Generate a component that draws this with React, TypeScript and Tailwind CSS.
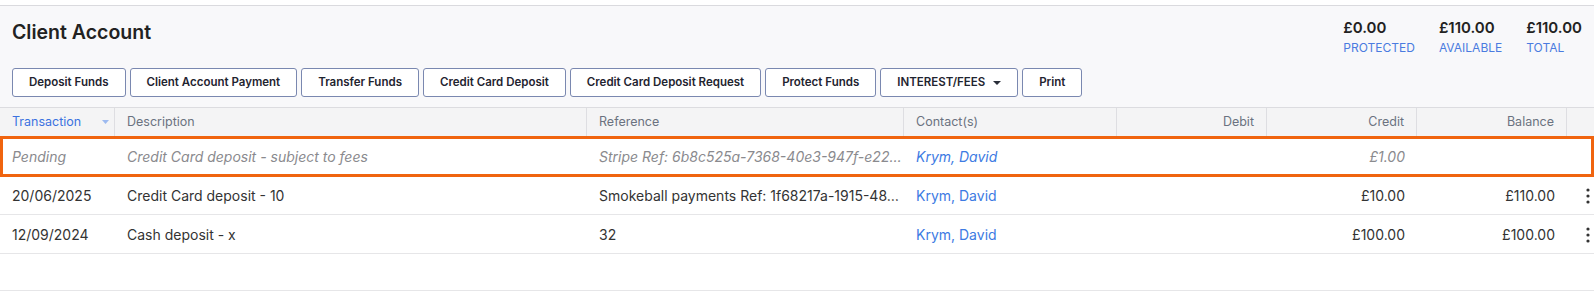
import React from 'react';

const buttons = [
  'Deposit Funds',
  'Client Account Payment',
  'Transfer Funds',
  'Credit Card Deposit',
  'Credit Card Deposit Request',
  'Protect Funds',
];

const totals = [
  { amount: '£0.00', label: 'PROTECTED' },
  { amount: '£110.00', label: 'AVAILABLE' },
  { amount: '£110.00', label: 'TOTAL' },
];

const rows = [
  {
    date: '20/06/2025',
    description: 'Credit Card deposit - 10',
    reference: 'Smokeball payments Ref: 1f68217a-1915-48…',
    contact: 'Krym, David',
    debit: '',
    credit: '£10.00',
    balance: '£110.00',
  },
  {
    date: '12/09/2024',
    description: 'Cash deposit - x',
    reference: '32',
    contact: 'Krym, David',
    debit: '',
    credit: '£100.00',
    balance: '£100.00',
  },
];

const cols = 'grid grid-cols-[115px_472px_317px_213px_150px_150px_150px_1fr]';
const btn =
  'h-[29px] px-4 rounded-[3px] border border-[#7a88b0] bg-white text-[11.5px] font-semibold text-[#1f2430] whitespace-nowrap';

const Dots = () => (
  <svg width="4" height="16" viewBox="0 0 4 16" className="text-[#333]">
    <circle cx="2" cy="2" r="1.6" fill="currentColor" />
    <circle cx="2" cy="8" r="1.6" fill="currentColor" />
    <circle cx="2" cy="14" r="1.6" fill="currentColor" />
  </svg>
);

const App: React.FC = () => {
  return (
    <div className="w-full min-h-[293px] bg-white font-['Inter',sans-serif] text-[#333]">
      <div className="mt-[5px] border-t border-[#dadade]">
        {/* header */}
        <div className="bg-[#f8f8fa] px-3 pt-[11px] pb-[10px] border-b border-[#dcdce0]">
          <div className="flex items-start justify-between">
            <h1 className="text-[19.5px] leading-7 font-semibold text-[#222] pt-px">Client Account</h1>
            <div className="flex gap-6 pt-px">
              {totals.map((t, i) => (
                <div key={i} className="flex flex-col">
                  <span className="text-[15px] leading-5 font-semibold text-[#222]">{t.amount}</span>
                  <span className="text-[12px] leading-4 mt-0.5 text-[#4a7be0]">{t.label}</span>
                </div>
              ))}
            </div>
          </div>
          <div className="flex gap-1 mt-[12px]">
            {buttons.map((b) => (
              <button key={b} className={btn}>
                {b}
              </button>
            ))}
            <button className={`${btn} flex items-center gap-2`}>
              INTEREST/FEES
              <svg width="8" height="4" viewBox="0 0 8 4">
                <path d="M0 0h8L4 4z" fill="#2a2f3a" />
              </svg>
            </button>
            <button className={btn}>Print</button>
          </div>
        </div>

        {/* table header */}
        <div className={`${cols} h-[29px] bg-[#f4f4f5] border-b border-[#e2e2e5] text-[12.5px] text-[#6b7280]`}>
          <div className="flex items-center pl-3 pr-[5px] border-r border-[#dedee2] text-[#3b72e0]">
            <span>Transaction</span>
            <svg width="7" height="4" viewBox="0 0 7 4" className="ml-auto">
              <path d="M0 0h7L3.5 4z" fill="#9dbaf0" />
            </svg>
          </div>
          <div className="flex items-center px-3 border-r border-[#dedee2]">Description</div>
          <div className="flex items-center px-3 border-r border-[#dedee2]">Reference</div>
          <div className="flex items-center px-3 border-r border-[#dedee2]">Contact(s)</div>
          <div className="flex items-center justify-end px-3 border-r border-[#dedee2]">Debit</div>
          <div className="flex items-center justify-end px-3 border-r border-[#dedee2]">Credit</div>
          <div className="flex items-center justify-end px-3 border-r border-[#dedee2]">Balance</div>
          <div />
        </div>

        {/* pending row */}
        <div className={`${cols} relative h-[39px] border-b border-[#e6e6e8] text-[14px] italic text-[#8a8a8e]`}>
          <div className="flex items-center px-3">Pending</div>
          <div className="flex items-center px-3">Credit Card deposit - subject to fees</div>
          <div className="flex items-center pl-3 pr-0.5 min-w-0">
            <span className="whitespace-nowrap overflow-hidden">Stripe Ref: 6b8c525a-7368-40e3-947f-e22…</span>
          </div>
          <div className="flex items-center px-3 text-[#3d7be3]">Krym, David</div>
          <div className="flex items-center justify-end px-3" />
          <div className="flex items-center justify-end px-3">£1.00</div>
          <div className="flex items-center justify-end px-3" />
          <div />
          <div className="absolute inset-x-0 -top-[1px] -bottom-[2px] border-[3px] border-[#f0640f] pointer-events-none" />
        </div>

        {rows.map((r, i) => (
          <div key={i} className={`${cols} h-[39px] border-b border-[#e6e6e8] text-[14px] text-[#333]`}>
            <div className="flex items-center px-3">{r.date}</div>
            <div className="flex items-center px-3">{r.description}</div>
            <div className="flex items-center pl-3 pr-0.5 min-w-0">
              <span className="whitespace-nowrap overflow-hidden">{r.reference}</span>
            </div>
            <div className="flex items-center px-3 text-[#3d7be3]">{r.contact}</div>
            <div className="flex items-center justify-end px-3">{r.debit}</div>
            <div className="flex items-center justify-end px-3">{r.credit}</div>
            <div className="flex items-center justify-end px-3">{r.balance}</div>
            <div className="flex items-center justify-end pr-1 pt-0.5">
              <Dots />
            </div>
          </div>
        ))}

        <div className="h-[37px] border-b border-[#e6e6e8]" />
      </div>
    </div>
  );
};

export default App;
